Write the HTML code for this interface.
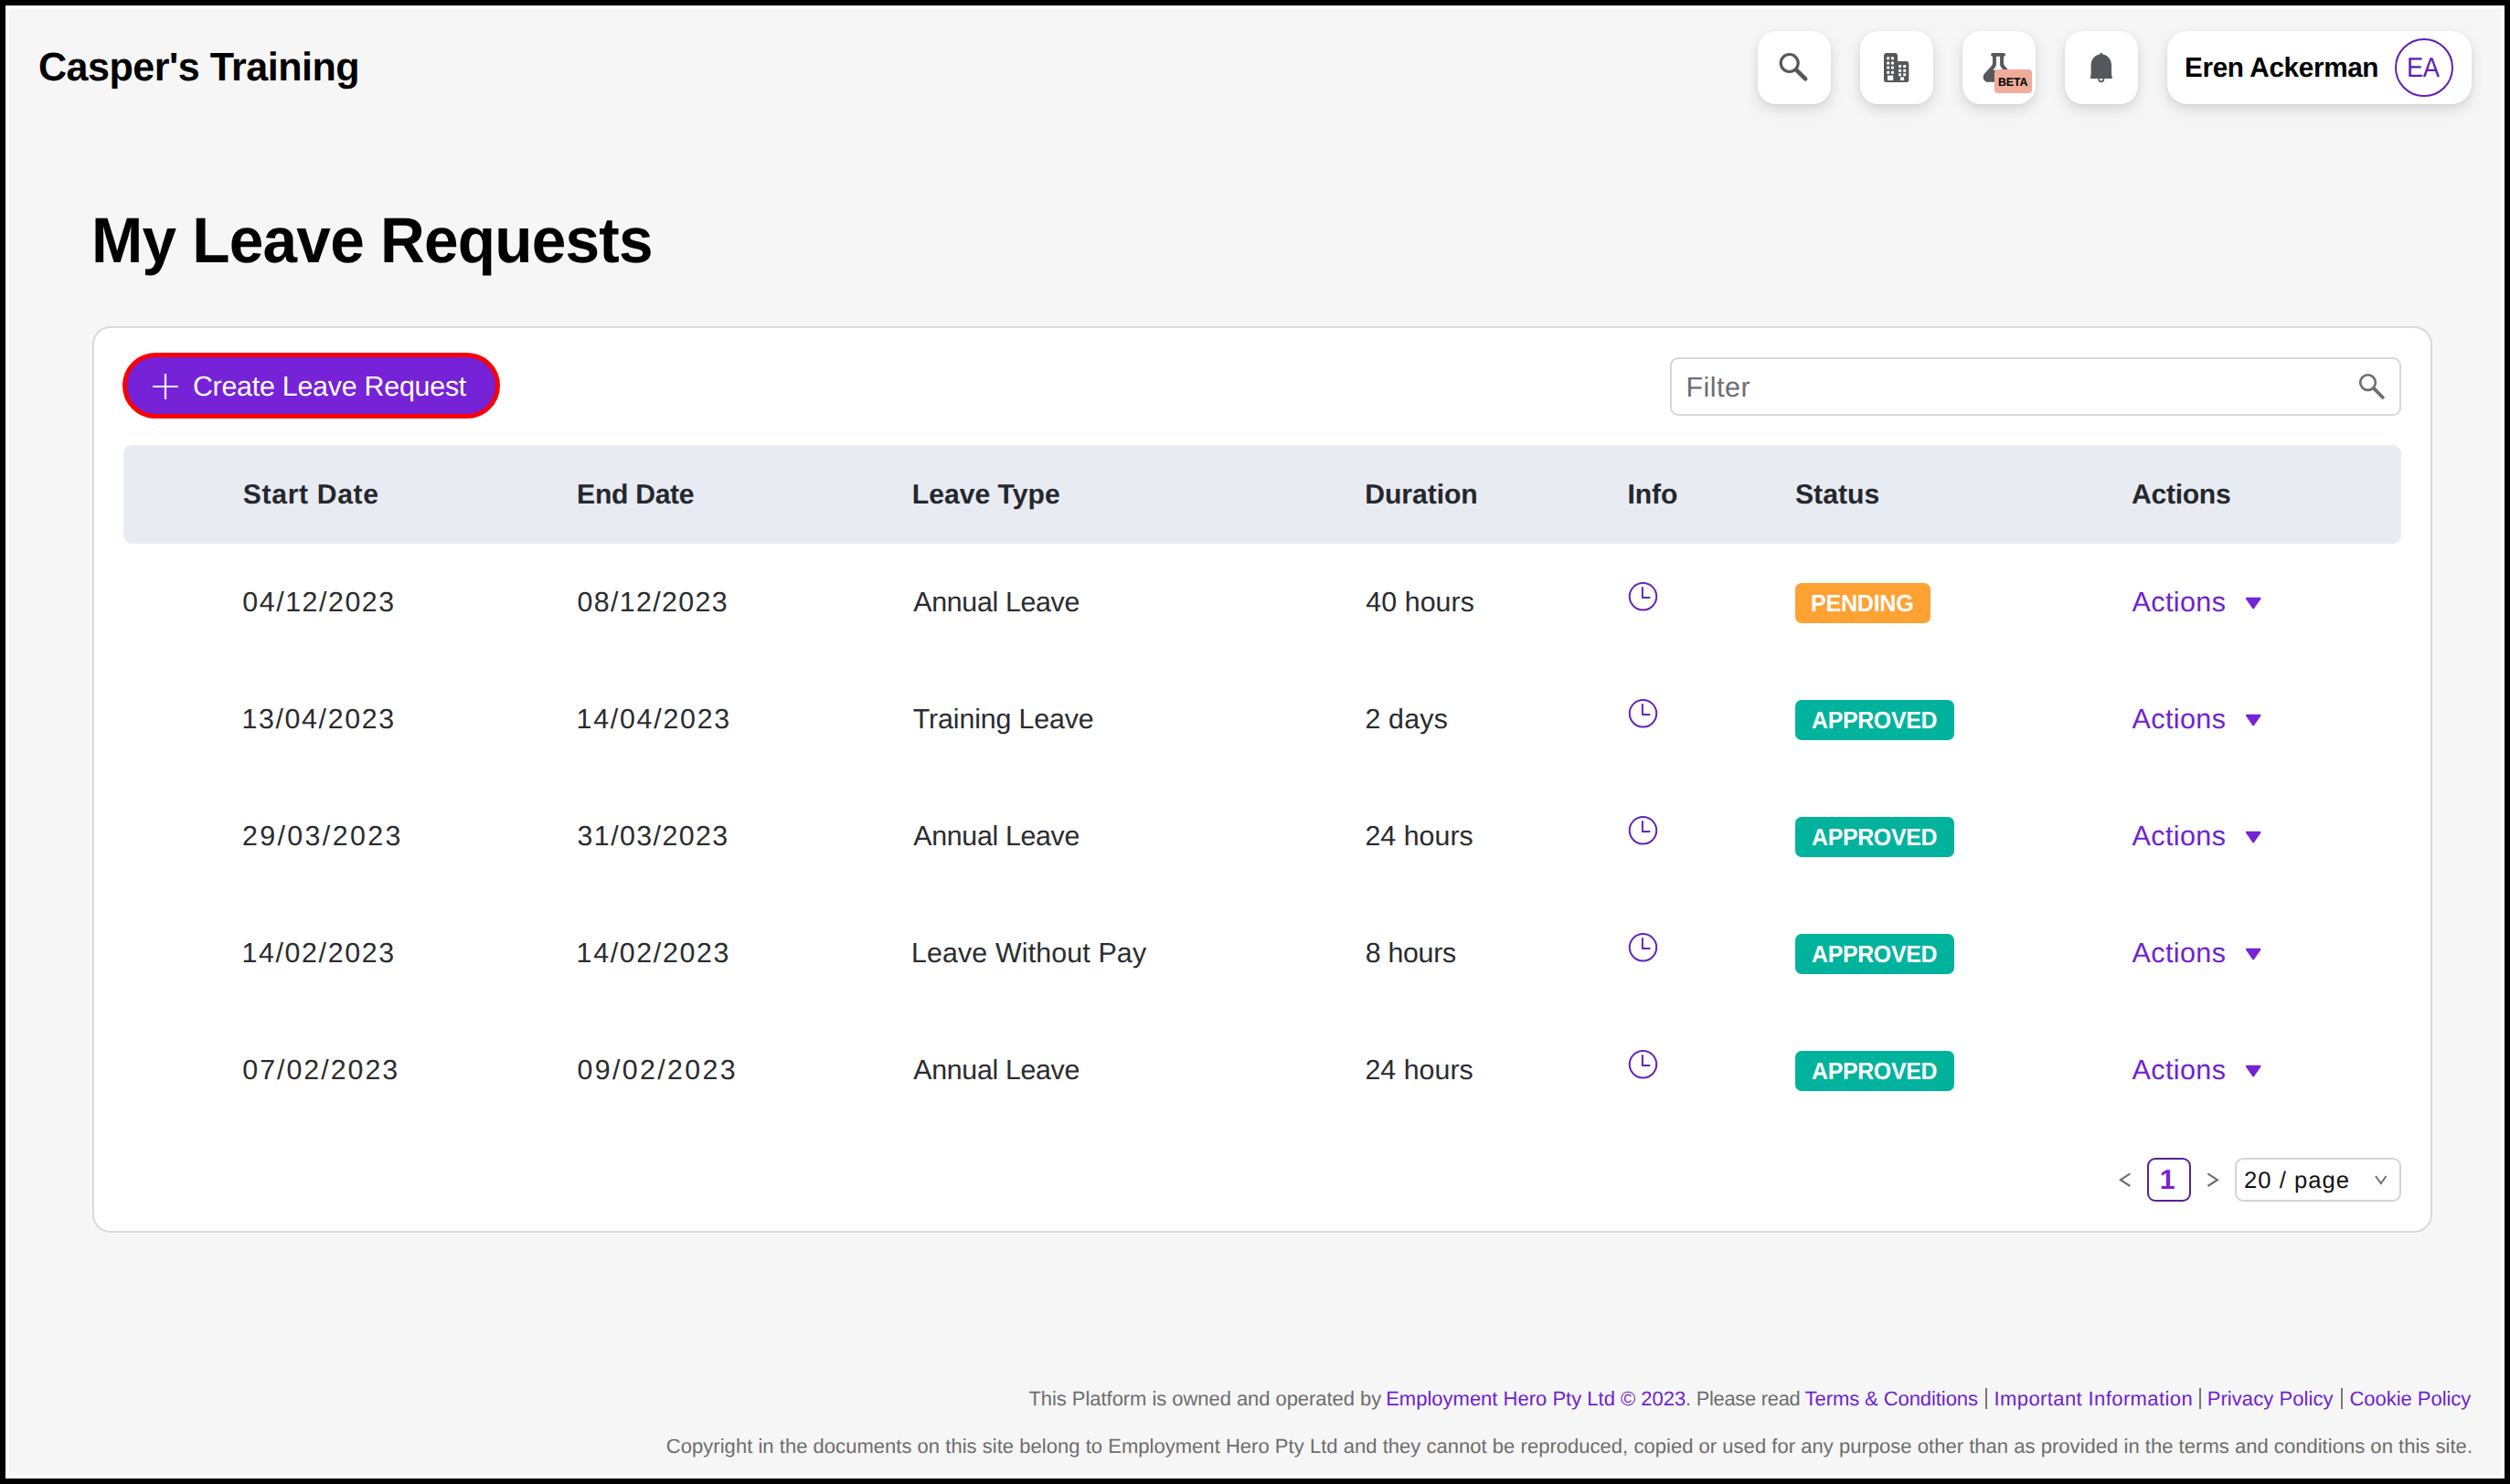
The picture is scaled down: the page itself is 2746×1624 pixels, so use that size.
<!DOCTYPE html>
<html lang="en">
<head>
<meta charset="utf-8">
<title>My Leave Requests</title>
<style>
html,body{margin:0;padding:0;overflow:hidden}
body{width:2746px;height:1624px;background:#000;position:relative;overflow:hidden;font-family:"Liberation Sans",sans-serif}
.frame{position:absolute;left:6px;top:6px;width:2734px;height:1612px;background:#fff}
.page{position:absolute;left:10px;top:10px;width:2726px;height:1604px;background:#f6f6f6}
.abs,.t,.hb,.badge,.card,.thead,.btn,.filter,.pg,.sel,.bar,svg{position:absolute}
.t{white-space:nowrap;line-height:1;margin:0;padding:0;display:block;text-decoration:none;text-rendering:geometricPrecision;transform-origin:0 0}
.hb{background:#fff;border-radius:20px;box-shadow:0 6px 16px rgba(0,0,0,.13),0 1px 4px rgba(0,0,0,.05);top:34px;height:80px;width:80px}
.card{left:101px;top:357px;width:2556px;height:988px;border:2px solid #d9dadd;border-radius:20px;background:#fff}
.btn{left:134px;top:386px;width:403px;height:62px;border:5px solid #fb0004;border-radius:40px;background:#7622d7}
.filter{left:1827px;top:391px;width:796px;height:60px;border:2px solid #d5d6d9;border-radius:9px;background:#fff}
.thead{left:135px;top:487px;width:2492px;height:108px;border-radius:9px;background:#e8ebf2}
.badge{left:1964px;height:44px;border-radius:7px}
.pend{width:148px;background:#ffa234}
.appr{width:174px;background:#01b39d}
.pg{left:2349px;top:1267px;width:44px;height:44px;border:2px solid #56238f;border-radius:9px;background:#fff}
.sel{left:2445px;top:1267px;width:178px;height:44px;border:2px solid #d4d4d6;border-radius:9px;background:#fff}
.bar{top:1519px;width:2px;height:23px;background:#777}
.beta{left:2182.300px;top:76.300px;width:40.500px;height:25.500px;border-radius:4px;background:#f0ab9b}
.avatar{left:2620px;top:42px;width:60px;height:60px;border:2px solid #5e1fb8;border-radius:50%}

</style>
</head>
<body>
<div class="frame"></div>
<div class="page"></div>

<!-- top navigation -->
<div class="hb" style="left:1923px"></div>
<div class="hb" style="left:2035px"></div>
<div class="hb" style="left:2147px"></div>
<div class="hb" style="left:2259px"></div>
<div class="hb" style="left:2371px;width:333px;border-radius:22px"></div>
<div class="abs avatar"></div>

<!-- search icon -->
<svg style="left:1923px;top:34px" width="80" height="80" viewBox="0 0 80 80">
  <circle cx="34.7" cy="35" r="9.5" fill="none" stroke="#56575c" stroke-width="3.2"/>
  <path d="M42.3 42.6 L52.2 52.3" stroke="#56575c" stroke-width="4.6" stroke-linecap="round" fill="none"/>
</svg>
<!-- building icon -->
<svg style="left:2035px;top:34px" width="80" height="80" viewBox="0 0 80 80">
  <path fill="#56575c" d="M26 27a3 3 0 0 1 3-3h9a3 3 0 0 1 3 3v6h9.3a3 3 0 0 1 3 3v17.5a2.5 2.5 0 0 1-2.500 2.500h-22.300a2.500 2.500 0 0 1-2.500-2.500z"/>
  <g fill="#fff">
    <rect x="29.200" y="28.300" width="3" height="3" rx=".6"/><rect x="34" y="28.300" width="3" height="3" rx=".6"/>
    <rect x="29.200" y="33.500" width="3" height="3" rx=".6"/><rect x="34" y="33.500" width="3" height="3" rx=".6"/>
    <rect x="29.200" y="38.600" width="3" height="3" rx=".6"/><rect x="34" y="38.600" width="3" height="3" rx=".6"/>
    <rect x="29.200" y="43.800" width="3" height="3" rx=".6"/><rect x="34" y="43.800" width="3" height="3" rx=".6"/>
    <rect x="30" y="48.600" width="6.200" height="5.400"/>
    <rect x="42.100" y="37" width="3" height="3" rx=".6"/><rect x="47.200" y="37" width="3" height="3" rx=".6"/>
    <rect x="42.100" y="41.800" width="3" height="3" rx=".6"/><rect x="47.200" y="41.800" width="3" height="3" rx=".6"/>
    <rect x="42.100" y="46.200" width="3" height="3" rx=".6"/><rect x="47.200" y="46.200" width="3" height="3" rx=".6"/>
    <rect x="44" y="50.400" width="4.100" height="3.600"/>
  </g>
</svg>
<!-- flask icon -->
<svg style="left:2147px;top:34px" width="80" height="80" viewBox="0 0 80 80">
  <path d="M32.900 25.900H45.200" stroke="#56575c" stroke-width="3.600" stroke-linecap="round" fill="none"/>
  <path fill="#56575c" d="M33 26.500V35c0 1.500-.7 2.500-2 4l-6.500 7c-2.500 2.800-2.200 6 -.5 8 1 1.200 2.200 1.800 4 1.800H50c1.800 0 3-.6 4-1.800 1.700-2 2-5.200-.5-8L47 39c-1.300-1.500-2-2.500-2-4V26.500z"/>
  <path fill="#fff" d="M36.900 27.700V36.500c0 1.500-.6 2.500-1.600 3.800l-2.100 2.400H44.800l-2.100-2.400c-1-1.300-1.600-2.300-1.600-3.800V27.700z"/>
</svg>
<div class="abs beta"></div>
<!-- bell icon -->
<svg style="left:2259px;top:34px" width="80" height="80" viewBox="0 0 80 80">
  <circle cx="39.800" cy="52.700" r="2.600" fill="#fff" stroke="#56575c" stroke-width="1.700"/>
  <path fill="#56575c" d="M39.800 24c.9 0 1.600.700 1.700 1.500 5.500.900 9.500 5.700 9.500 11.700v8.300c0 2 .2 3.500.700 5.500H27.900c.5-2 .7-3.500.700-5.500v-8.300c0-6 4-10.800 9.500-11.700.1-.8.800-1.500 1.700-1.500z"/>
  <rect x="27.800" y="50" width="24" height="2" rx="1" fill="#56575c"/>
</svg>

<!-- card -->
<div class="card"></div>
<div class="btn"></div>
<svg style="left:161px;top:403px" width="40" height="40" viewBox="0 0 40 40"><path d="M20 6v28M6 20h28" stroke="#fff" stroke-width="2.200" fill="none"/></svg>
<div class="filter"></div>
<svg style="left:2570px;top:398px" width="50" height="50" viewBox="0 0 50 50">
  <circle cx="20.500" cy="20.600" r="8.300" fill="none" stroke="#6c6e73" stroke-width="2.600"/>
  <path d="M27.200 27.200 L36.800 37" stroke="#6c6e73" stroke-width="3.800" stroke-linecap="round" fill="none"/>
</svg>
<div class="thead"></div>

<!-- status badges -->
<div class="badge pend" style="top:638px"></div>
<div class="badge appr" style="top:766px"></div>
<div class="badge appr" style="top:894px"></div>
<div class="badge appr" style="top:1022px"></div>
<div class="badge appr" style="top:1150px"></div>

<!-- clock icons + dropdown carets -->
<svg style="left:0;top:0" width="2746" height="1624" viewBox="0 0 2746 1624">
  <defs>
    <g id="clk"><circle cx="0" cy="0" r="14.750" fill="none" stroke="#6324be" stroke-width="2"/><path d="M-.6 -9.700V1.200H7.100" fill="none" stroke="#6324be" stroke-width="2" stroke-linecap="round" stroke-linejoin="round"/></g>
    <path id="car" d="M-7.300 -5.800h14.600a1 1 0 0 1 .8 1.600l-7.100 10.300a1.200 1.200 0 0 1-2 0l-7.100-10.300a1 1 0 0 1 .8-1.600z" fill="#7622d7"/>
  </defs>
  <use href="#clk" x="1797.500" y="652.800"/><use href="#car" x="2465.200" y="659.600"/>
  <use href="#clk" x="1797.500" y="780.800"/><use href="#car" x="2465.200" y="787.600"/>
  <use href="#clk" x="1797.500" y="908.800"/><use href="#car" x="2465.200" y="915.600"/>
  <use href="#clk" x="1797.500" y="1036.800"/><use href="#car" x="2465.200" y="1043.600"/>
  <use href="#clk" x="1797.500" y="1164.800"/><use href="#car" x="2465.200" y="1171.600"/>
  <!-- pagination arrows -->
  <path d="M2330.400 1284.400L2320 1291.200L2330.400 1298" fill="none" stroke="#707070" stroke-width="2.200"/>
  <path d="M2415.400 1284.400L2425.800 1291.200L2415.400 1298" fill="none" stroke="#707070" stroke-width="2.200"/>
</svg>
<div class="pg"></div>
<div class="sel"></div>
<svg style="left:2590px;top:1278px" width="30" height="26" viewBox="0 0 30 26"><path d="M9 9L14.800 17L20.600 9" fill="none" stroke="#707070" stroke-width="2"/></svg>

<!-- footer separators -->
<div class="bar" style="left:2172px"></div>
<div class="bar" style="left:2406px"></div>
<div class="bar" style="left:2561px"></div>

<div class="t" style="left:41.65px;top:52.05px;font-size:43.80px;font-weight:700;color:#000;letter-spacing:-0.526px;transform:scaleX(0.984)">Casper's Training</div>
<div class="t" style="left:2390.44px;top:58.90px;font-size:30.40px;font-weight:700;color:#000;letter-spacing:-0.365px;transform:scaleX(0.977)">Eren Ackerman</div>
<div class="t" style="left:2633.17px;top:59.90px;font-size:30.30px;font-weight:400;color:#5e1fb8;letter-spacing:-0.423px;transform:scaleX(0.900)">EA</div>
<div class="t" style="left:2186.11px;top:83.90px;font-size:12.60px;font-weight:700;color:#000;letter-spacing:-0.151px;transform:scaleX(0.984)">BETA</div>
<h1 class="t" style="left:100.28px;top:228.05px;font-size:70.00px;font-weight:700;color:#000;letter-spacing:-0.840px;transform:scaleX(0.966)">My Leave Requests</h1>
<div class="t" style="left:210.88px;top:408.00px;font-size:30.40px;font-weight:400;color:#fff;letter-spacing:-0.246px">Create Leave Request</div>
<div class="t" style="left:1844.52px;top:408.80px;font-size:30.50px;font-weight:400;color:#6c6e73;letter-spacing:0.451px">Filter</div>
<div class="t" style="left:265.83px;top:527.00px;font-size:30.20px;font-weight:700;color:#25282d;letter-spacing:0.619px">Start Date</div>
<div class="t" style="left:631.11px;top:527.00px;font-size:30.20px;font-weight:700;color:#25282d;letter-spacing:-0.335px">End Date</div>
<div class="t" style="left:997.81px;top:527.00px;font-size:30.20px;font-weight:700;color:#25282d;letter-spacing:-0.036px">Leave Type</div>
<div class="t" style="left:1493.31px;top:527.00px;font-size:30.20px;font-weight:700;color:#25282d;letter-spacing:-0.086px">Duration</div>
<div class="t" style="left:1780.51px;top:527.00px;font-size:30.20px;font-weight:700;color:#25282d;letter-spacing:-0.156px">Info</div>
<div class="t" style="left:1963.93px;top:527.00px;font-size:30.20px;font-weight:700;color:#25282d;letter-spacing:0.040px">Status</div>
<div class="t" style="left:2332.03px;top:527.00px;font-size:30.20px;font-weight:700;color:#25282d;letter-spacing:-0.325px">Actions</div>
<div class="t" style="left:265.35px;top:644.00px;font-size:30.40px;font-weight:400;color:#2a2c30;letter-spacing:1.526px">04/12/2023</div>
<div class="t" style="left:631.55px;top:644.00px;font-size:30.40px;font-weight:400;color:#2a2c30;letter-spacing:1.326px">08/12/2023</div>
<div class="t" style="left:999.30px;top:644.00px;font-size:30.40px;font-weight:400;color:#2a2c30;letter-spacing:-0.346px">Annual Leave</div>
<div class="t" style="left:1494.33px;top:644.00px;font-size:30.40px;font-weight:400;color:#2a2c30;letter-spacing:0.046px">40 hours</div>
<div class="t" style="left:1981.33px;top:647.00px;font-size:26.30px;font-weight:700;color:#fff;letter-spacing:-0.316px;transform:scaleX(0.956)">PENDING</div>
<a class="t" style="left:2332.50px;top:644.10px;font-size:30.50px;font-weight:400;color:#6f22d0;letter-spacing:0.406px">Actions</a>
<div class="t" style="left:264.40px;top:772.00px;font-size:30.40px;font-weight:400;color:#2a2c30;letter-spacing:1.632px">13/04/2023</div>
<div class="t" style="left:630.60px;top:772.00px;font-size:30.40px;font-weight:400;color:#2a2c30;letter-spacing:1.720px">14/04/2023</div>
<div class="t" style="left:998.82px;top:772.00px;font-size:30.40px;font-weight:400;color:#2a2c30;letter-spacing:-0.159px">Training Leave</div>
<div class="t" style="left:1493.38px;top:772.00px;font-size:30.40px;font-weight:400;color:#2a2c30;letter-spacing:0.202px">2 days</div>
<div class="t" style="left:1981.61px;top:775.00px;font-size:26.30px;font-weight:700;color:#fff;letter-spacing:-0.316px;transform:scaleX(0.945)">APPROVED</div>
<a class="t" style="left:2332.50px;top:772.10px;font-size:30.50px;font-weight:400;color:#6f22d0;letter-spacing:0.406px">Actions</a>
<div class="t" style="left:264.88px;top:900.00px;font-size:30.40px;font-weight:400;color:#2a2c30;letter-spacing:2.379px">29/03/2023</div>
<div class="t" style="left:631.55px;top:900.00px;font-size:30.40px;font-weight:400;color:#2a2c30;letter-spacing:1.393px">31/03/2023</div>
<div class="t" style="left:999.30px;top:900.00px;font-size:30.40px;font-weight:400;color:#2a2c30;letter-spacing:-0.346px">Annual Leave</div>
<div class="t" style="left:1493.38px;top:900.00px;font-size:30.40px;font-weight:400;color:#2a2c30;letter-spacing:0.010px">24 hours</div>
<div class="t" style="left:1981.61px;top:903.00px;font-size:26.30px;font-weight:700;color:#fff;letter-spacing:-0.316px;transform:scaleX(0.945)">APPROVED</div>
<a class="t" style="left:2332.50px;top:900.10px;font-size:30.50px;font-weight:400;color:#6f22d0;letter-spacing:0.406px">Actions</a>
<div class="t" style="left:264.40px;top:1028.00px;font-size:30.40px;font-weight:400;color:#2a2c30;letter-spacing:1.632px">14/02/2023</div>
<div class="t" style="left:630.60px;top:1028.00px;font-size:30.40px;font-weight:400;color:#2a2c30;letter-spacing:1.632px">14/02/2023</div>
<div class="t" style="left:996.92px;top:1028.00px;font-size:30.40px;font-weight:400;color:#2a2c30;letter-spacing:0.132px">Leave Without Pay</div>
<div class="t" style="left:1493.85px;top:1028.00px;font-size:30.40px;font-weight:400;color:#2a2c30;letter-spacing:-0.350px">8 hours</div>
<div class="t" style="left:1981.61px;top:1031.00px;font-size:26.30px;font-weight:700;color:#fff;letter-spacing:-0.316px;transform:scaleX(0.945)">APPROVED</div>
<a class="t" style="left:2332.50px;top:1028.10px;font-size:30.50px;font-weight:400;color:#6f22d0;letter-spacing:0.406px">Actions</a>
<div class="t" style="left:265.35px;top:1156.00px;font-size:30.40px;font-weight:400;color:#2a2c30;letter-spacing:1.970px">07/02/2023</div>
<div class="t" style="left:631.55px;top:1156.00px;font-size:30.40px;font-weight:400;color:#2a2c30;letter-spacing:2.337px">09/02/2023</div>
<div class="t" style="left:999.30px;top:1156.00px;font-size:30.40px;font-weight:400;color:#2a2c30;letter-spacing:-0.346px">Annual Leave</div>
<div class="t" style="left:1493.38px;top:1156.00px;font-size:30.40px;font-weight:400;color:#2a2c30;letter-spacing:0.010px">24 hours</div>
<div class="t" style="left:1981.61px;top:1159.00px;font-size:26.30px;font-weight:700;color:#fff;letter-spacing:-0.316px;transform:scaleX(0.945)">APPROVED</div>
<a class="t" style="left:2332.50px;top:1156.10px;font-size:30.50px;font-weight:400;color:#6f22d0;letter-spacing:0.406px">Actions</a>
<div class="t" style="left:2362.71px;top:1276.90px;font-size:30.30px;font-weight:700;color:#7622d7;letter-spacing:0.000px">1</div>
<div class="t" style="left:2455.00px;top:1279.80px;font-size:25.60px;font-weight:400;color:#111;letter-spacing:1.022px">20 / page</div>
<div class="t" style="left:1125.46px;top:1520.05px;font-size:22.00px;font-weight:400;color:#6d6d6d;letter-spacing:-0.052px">This Platform is owned and operated by</div>
<a class="t" style="left:1516.18px;top:1520.05px;font-size:22.00px;font-weight:400;color:#6f22d0;letter-spacing:0.003px">Employment Hero Pty Ltd © 2023</a>
<div class="t" style="left:1843.69px;top:1520.05px;font-size:22.00px;font-weight:400;color:#6d6d6d;letter-spacing:-0.264px;transform:scaleX(0.994)">. Please read</div>
<a class="t" style="left:1974.56px;top:1520.05px;font-size:22.00px;font-weight:400;color:#6f22d0;letter-spacing:-0.077px">Terms &amp; Conditions</a>
<a class="t" style="left:2181.58px;top:1520.05px;font-size:22.00px;font-weight:400;color:#6f22d0;letter-spacing:0.398px">Important Information</a>
<a class="t" style="left:2414.68px;top:1520.05px;font-size:22.00px;font-weight:400;color:#6f22d0;letter-spacing:0.069px">Privacy Policy</a>
<a class="t" style="left:2570.47px;top:1520.05px;font-size:22.00px;font-weight:400;color:#6f22d0;letter-spacing:-0.037px">Cookie Policy</a>
<div class="t" style="left:728.87px;top:1572.10px;font-size:22.00px;font-weight:400;color:#6d6d6d;letter-spacing:0.030px">Copyright in the documents on this site belong to Employment Hero Pty Ltd and they cannot be reproduced, copied or used for any purpose other than as provided in the terms and conditions on this site.</div>

</body>
</html>
